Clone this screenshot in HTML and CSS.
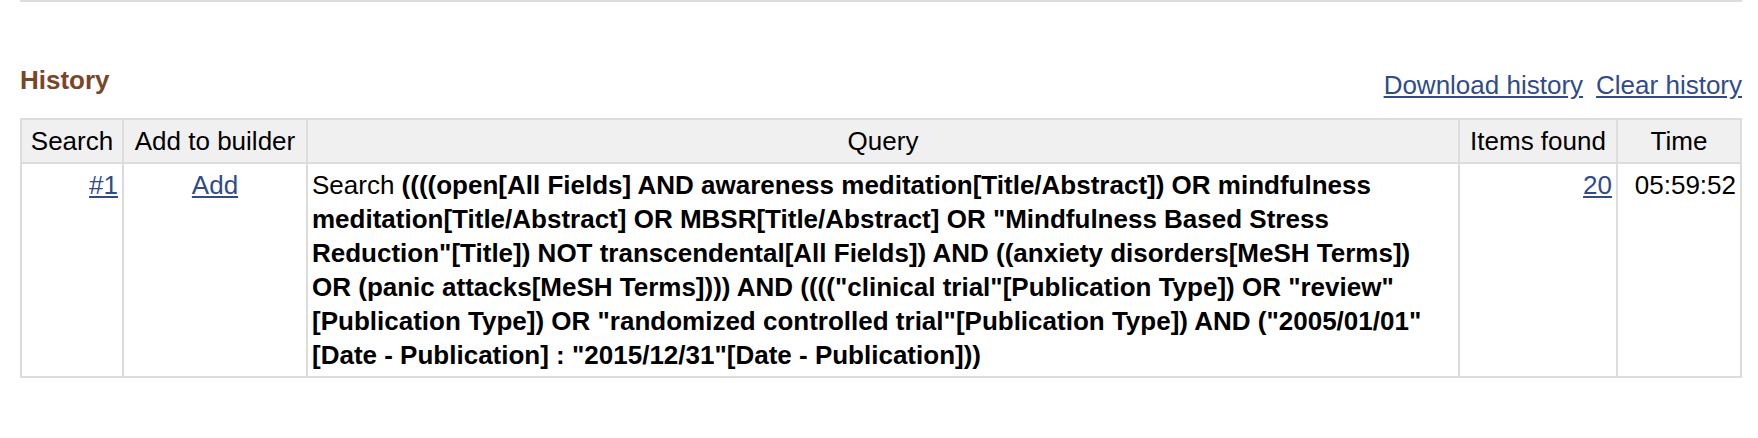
FILE: index.html
```html
<!DOCTYPE html>
<html lang="en">
<head>
    <meta charset="UTF-8">
    <title>History</title>
    <link rel="stylesheet" href="styles.css">
</head>
<body>
    <div class="page">
        <div class="top-rule"></div>
        <div class="history-bar">
            <h2 class="history-title">History</h2>
            <div class="history-links">
                <a href="#">Download history</a>
                <a href="#">Clear history</a>
            </div>
        </div>
        <table class="history-table">
            <colgroup>
                <col class="col-search">
                <col class="col-add">
                <col class="col-query">
                <col class="col-items">
                <col class="col-time">
            </colgroup>
            <thead>
                <tr>
                    <th>Search</th>
                    <th>Add to builder</th>
                    <th>Query</th>
                    <th>Items found</th>
                    <th>Time</th>
                </tr>
            </thead>
            <tbody>
                <tr>
                    <td class="num"><a href="#">#1</a></td>
                    <td class="center"><a href="#">Add</a></td>
                    <td><div class="query">Search <b>((((open[All Fields] AND awareness meditation[Title/Abstract]) OR mindfulness meditation[Title/Abstract] OR MBSR[Title/Abstract] OR "Mindfulness Based Stress Reduction"[Title]) NOT transcendental[All Fields]) AND ((anxiety disorders[MeSH Terms]) OR (panic attacks[MeSH Terms]))) AND (((("clinical trial"[Publication Type]) OR "review"[Publication Type]) OR "randomized controlled trial"[Publication Type]) AND ("2005/01/01"[Date - Publication] : "2015/12/31"[Date - Publication]))</b></div></td>
                    <td class="num"><a href="#">20</a></td>
                    <td class="num">05:59:52</td>
                </tr>
            </tbody>
        </table>
    </div>
</body>
</html>
```

FILE: styles.css
```css
body {
    margin: 0;
    font-family: "Liberation Sans", Arial, sans-serif;
    font-size: 26px;
    line-height: 34px;
    color: #000;
    background-color: #fff;
}
.page {
    padding: 0 16px 0 20px;
}
.top-rule {
    height: 2px;
    background-color: #dddddd;
}
.history-bar {
    display: flex;
    justify-content: space-between;
    align-items: flex-start;
    margin-top: 61px;
}
.history-title {
    margin: 0;
    font-size: 26px;
    line-height: 34px;
    color: #7a4628;
}
.history-links {
    margin-top: 5px;
    display: flex;
    gap: 13px;
}
a {
    color: #2f4b8b;
    text-decoration: underline;
}
.history-table {
    margin-top: 16px;
    width: 100%;
    border-collapse: collapse;
    table-layout: fixed;
    border: 2px solid #dddddd;
}
.history-table th,
.history-table td {
    border: 2px solid #dddddd;
    padding: 4px;
    vertical-align: top;
}
.history-table th {
    font-weight: normal;
    background-color: #f0f0f0;
    text-align: center;
}
.col-search { width: 102px; }
.col-add { width: 184px; }
.col-items { width: 158px; }
.col-time { width: 124px; }
.num {
    text-align: right;
}
.center {
    text-align: center;
}
.query {
    max-width: 1120px;
}
```
